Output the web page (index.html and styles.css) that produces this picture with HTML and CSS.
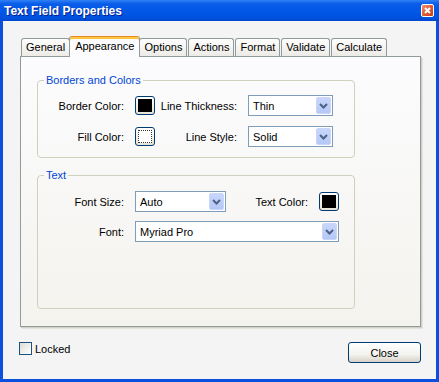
FILE: index.html
```html
<!DOCTYPE html>
<html lang="en">
<head>
    <meta charset="utf-8">
    <title>Text Field Properties</title>
    <link rel="stylesheet" href="styles.css">
</head>
<body>
    <div class="window">
        <div class="titlebar">
            <span class="title">Text Field Properties</span>
            <span class="closeX">
                <svg width="11" height="11" viewBox="0 0 11 11"><path d="M3 3 L8 8 M8 3 L3 8" stroke="#fff" stroke-width="2"/></svg>
            </span>
        </div>
        <div class="client">
            <div class="tabs">
                <div class="tab">General</div>
                <div class="tab active">Appearance</div>
                <div class="tab">Options</div>
                <div class="tab">Actions</div>
                <div class="tab">Format</div>
                <div class="tab">Validate</div>
                <div class="tab">Calculate</div>
            </div>
            <div class="panel">
                <fieldset class="group">
                    <legend>Borders and Colors</legend>
                    <div class="grid gridBorders">
                        <label class="lbl">Border Color:</label>
                        <div class="swatch"><span class="chip black"></span></div>
                        <label class="lbl">Line Thickness:</label>
                        <div class="combo">
                            <span>Thin</span>
                            <span class="drop"><svg width="9" height="6" viewBox="0 0 9 6"><path d="M1 1 L4.5 4.5 L8 1" fill="none" stroke="#4d6185" stroke-width="2"/></svg></span>
                        </div>
                        <label class="lbl">Fill Color:</label>
                        <div class="swatch"><span class="chip white"></span></div>
                        <label class="lbl">Line Style:</label>
                        <div class="combo">
                            <span>Solid</span>
                            <span class="drop"><svg width="9" height="6" viewBox="0 0 9 6"><path d="M1 1 L4.5 4.5 L8 1" fill="none" stroke="#4d6185" stroke-width="2"/></svg></span>
                        </div>
                    </div>
                </fieldset>
                <fieldset class="group groupText">
                    <legend>Text</legend>
                    <div class="grid gridText">
                        <label class="lbl">Font Size:</label>
                        <div class="combo">
                            <span>Auto</span>
                            <span class="drop"><svg width="9" height="6" viewBox="0 0 9 6"><path d="M1 1 L4.5 4.5 L8 1" fill="none" stroke="#4d6185" stroke-width="2"/></svg></span>
                        </div>
                        <label class="lbl">Text Color:</label>
                        <div class="swatch"><span class="chip black"></span></div>
                        <label class="lbl">Font:</label>
                        <div class="combo wide">
                            <span>Myriad Pro</span>
                            <span class="drop"><svg width="9" height="6" viewBox="0 0 9 6"><path d="M1 1 L4.5 4.5 L8 1" fill="none" stroke="#4d6185" stroke-width="2"/></svg></span>
                        </div>
                    </div>
                </fieldset>
            </div>
            <div class="footer">
                <label class="checkLabel"><span class="check"></span>Locked</label>
                <button class="btn">Close</button>
            </div>
        </div>
    </div>
</body>
</html>
```

FILE: styles.css
```css
html, body{
    margin: 0;
    height: 100%;
}
body{
    font-family: "Liberation Sans", Arial, sans-serif;
    font-size: 11px;
    color: #000;
    background-color: #3a6ea5;
}
.window{
    height: 100vh;
    display: flex;
    flex-direction: column;
    background-color: #0a50dc;
    box-sizing: border-box;
}
.titlebar{
    height: 21px;
    flex: none;
    display: flex;
    align-items: center;
    justify-content: space-between;
    padding: 0 5px 0 4px;
    background: linear-gradient(#2f80f6 0%, #0a5de9 18%, #0056e6 55%, #0052df 85%, #0046cc 100%);
}
.title{
    color: #fff;
    font-weight: bold;
    font-size: 12px;
    text-shadow: 1px 1px #0a1e8c;
}
.closeX{
    width: 13px;
    height: 13px;
    box-sizing: border-box;
    border: 1px solid #fff;
    border-radius: 2px;
    background: linear-gradient(135deg, #f29272, #e25a31 50%, #c63d19);
    display: flex;
    align-items: center;
    justify-content: center;
}
.client{
    flex: 1;
    margin: 0 3px 3px;
    background-color: #f4f4f4;
    padding: 15px 15px 0 17px;
    display: flex;
    flex-direction: column;
}
.tabs{
    display: flex;
    align-items: flex-end;
    height: 21px;
    margin-bottom: -1px;
    padding-left: 1px;
    position: relative;
    z-index: 1;
}
.tab{
    height: 18px;
    box-sizing: border-box;
    margin: 0 1px 1px 0;
    padding: 0 4px;
    line-height: 17px;
    border: 1px solid #919b9c;
    border-bottom: none;
    border-radius: 3px 3px 0 0;
    background: linear-gradient(#fefefe, #ecebe6);
}
.tab.active{
    height: 21px;
    margin: 0 -1px 0 -2px;
    padding: 0 5px;
    line-height: 18px;
    border-top-color: #e68b2c;
    box-shadow: inset 0 2px 0 #ffc73c;
    background: #fcfcfe;
}
.panel{
    border: 1px solid #919b9c;
    box-shadow: 1px 1px 0 #d0cfc8, 2px 2px 0 #e4e3dc;
    background: linear-gradient(#fcfcfe, #f4f3ee);
    padding: 17px 65px 17px 16px;
}
.group{
    margin: 0;
    padding: 9px 6px 10px 10px;
    border: 1px solid #d0d0bf;
    border-radius: 4px;
    min-width: 0;
}
.group legend{
    margin-left: -4px;
    padding: 0 2px;
    color: #0046d5;
}
.groupText{
    margin-top: 11px;
    padding-top: 10px;
    padding-bottom: 66px;
}
.grid{
    display: grid;
    grid-template-columns: 76px 20px 71px 85px;
    grid-template-rows: 21px 21px;
    column-gap: 11px;
    row-gap: 10px;
    align-items: center;
}
.gridText{
    grid-template-columns: 76px 91px 71px 20px;
    row-gap: 9px;
}
.lbl{
    justify-self: end;
    white-space: nowrap;
}
.swatch{
    width: 20px;
    height: 19px;
    box-sizing: border-box;
    border: 1px solid #003c74;
    border-radius: 3px;
    background: linear-gradient(#ffffff, #e6e3d6);
    padding: 2px;
}
.chip{
    display: block;
    height: 100%;
    box-sizing: border-box;
}
.black{
    background-color: #000;
    border: 1px solid #000;
}
.white{
    background-color: #fff;
    border: 1px dotted #333;
}
.combo{
    height: 21px;
    box-sizing: border-box;
    border: 1px solid #7f9db9;
    background-color: #fff;
    display: flex;
    align-items: center;
    justify-content: space-between;
    padding: 0 1px 0 4px;
}
.combo.wide{
    grid-column: 2 / 5;
}
.drop{
    width: 15px;
    height: 17px;
    box-sizing: border-box;
    border: 1px solid #c9d6f8;
    border-radius: 2px;
    background: linear-gradient(#c8d6fb, #b4c8f7);
    display: flex;
    align-items: center;
    justify-content: center;
}
.footer{
    display: flex;
    justify-content: space-between;
    align-items: flex-start;
    margin: 15px 0 0 -1px;
}
.checkLabel{
    display: flex;
    align-items: center;
    gap: 3px;
}
.check{
    width: 13px;
    height: 13px;
    box-sizing: border-box;
    border: 1px solid #1c5180;
    background: linear-gradient(135deg, #dcdcd7, #fff);
}
.btn{
    width: 73px;
    height: 21px;
    box-sizing: border-box;
    border: 1px solid #003c74;
    border-radius: 3px;
    background: linear-gradient(#fff 0%, #f3f3ef 60%, #d8d2c6 100%);
    font: inherit;
    color: #000;
    padding: 0;
}
```
